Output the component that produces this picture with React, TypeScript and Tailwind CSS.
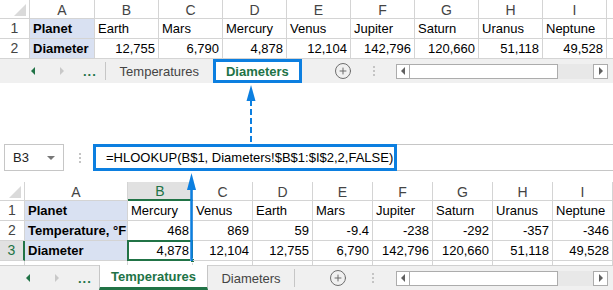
import { CirclePlus } from "lucide-react";

const topRows = [
  ["Planet", "Earth", "Mars", "Mercury", "Venus", "Jupiter", "Saturn", "Uranus", "Neptune"],
  ["Diameter", "12,755", "6,790", "4,878", "12,104", "142,796", "120,660", "51,118", "49,528"],
];

const bottomRows = [
  ["Planet", "Mercury", "Venus", "Earth", "Mars", "Jupiter", "Saturn", "Uranus", "Neptune"],
  ["Temperature, °F", "468", "869", "59", "-9.4", "-238", "-292", "-357", "-346"],
  ["Diameter", "4,878", "12,104", "12,755", "6,790", "142,796", "120,660", "51,118", "49,528"],
];

const cols = ["A", "B", "C", "D", "E", "F", "G", "H", "I"];

function Corner() {
  return (
    <div className="relative border-r border-b border-[#d4d4d4] bg-white">
      <svg className="absolute right-[3px] bottom-[2px]" width="12" height="12" viewBox="0 0 12 12">
        <polygon points="12,0 12,12 0,12" fill="#dadada" />
      </svg>
    </div>
  );
}

function Dots() {
  return (
    <div className="flex flex-col gap-[2px]">
      <span className="h-[2px] w-[2px] bg-[#c4c4c4]" />
      <span className="h-[2px] w-[2px] bg-[#c4c4c4]" />
      <span className="h-[2px] w-[2px] bg-[#c4c4c4]" />
    </div>
  );
}

function NavArrows({ pad }: { pad: string }) {
  return (
    <div className={`flex items-center ${pad}`}>
      <span className="h-0 w-0 border-y-[4px] border-r-[4px] border-y-transparent border-r-[#217346]" />
      <span className="ml-[25px] h-0 w-0 border-y-[4px] border-l-[4px] border-y-transparent border-l-[#c8c8c8]" />
      <span className="ml-[19px] text-[13px] font-bold leading-none tracking-[1px] text-[#217346]">...</span>
    </div>
  );
}

function HScroll() {
  return (
    <div className="ml-auto mr-[5px] flex h-[15px] w-[212px] bg-[#e8e8e8]">
      <div className="flex w-[14px] items-center justify-center border border-[#acacac] bg-white">
        <span className="h-0 w-0 border-y-[4px] border-r-[4px] border-y-transparent border-r-[#606060]" />
      </div>
      <div className="w-[148px] border-y border-r border-[#acacac] bg-white" />
      <div className="flex-1" />
      <div className="flex w-[15px] items-center justify-center border border-[#acacac] bg-white">
        <span className="h-0 w-0 border-y-[4px] border-l-[4px] border-y-transparent border-l-[#606060]" />
      </div>
    </div>
  );
}

export default function App() {
  return (
    <div className="relative h-[290px] w-[613px] overflow-hidden bg-white font-['Liberation_Sans',Arial,sans-serif] text-[13px] leading-[15px] text-black">
      {/* top sheet: Diameters */}
      <div className="grid grid-cols-[30px_65px_repeat(8,64px)_1fr] grid-rows-[19px_20px_20px]">
        <Corner />
        {cols.map((c) => (
          <div key={c} className="flex items-center justify-center border-r border-b border-[#d4d4d4] pt-px text-[14px] leading-[16px] text-[#444]">
            {c}
          </div>
        ))}
        <div className="border-b border-[#d4d4d4]" />
        {topRows.map((row, r) => (
          <>
            <div key={"h" + r} className="flex items-end justify-center border-r border-b border-[#d4d4d4] pb-[2px] text-[14px] leading-[16px] text-[#444]">
              {r + 1}
            </div>
            {row.map((v, i) => (
              <div
                key={r + "-" + i}
                className={`flex items-end overflow-hidden whitespace-nowrap border-r border-b border-[#d4d4d4] px-[3px] pb-[2px] ${
                  i === 0 ? "bg-[#d9e1f2] font-bold" : ""
                } ${r === 1 && i > 0 ? "justify-end" : ""}`}
              >
                {v}
              </div>
            ))}
            <div className="border-b border-[#d4d4d4]" />
          </>
        ))}
      </div>

      {/* top sheet tabs */}
      <div className="flex h-[24px] items-center bg-[#f0f0f0]">
        <NavArrows pad="pl-[31px]" />
        <div className="ml-[8px] h-[18px] w-px bg-[#c6c6c6]" />
        <div className="flex w-[107px] items-center justify-center text-[#444]">Temperatures</div>
        <div className="flex h-[24px] w-[89px] items-center justify-center border-[3px] border-[#0c7fe0] bg-white font-bold text-[#217346]">
          Diameters
        </div>
        <div className="ml-[32px] flex items-center">
          <CirclePlus size={18} strokeWidth={1.3} color="#6a6a6a" />
        </div>
        <div className="ml-[21px]">
          <Dots />
        </div>
        <HScroll />
      </div>

      {/* formula bar */}
      <div className="mt-[61px] flex h-[27px] items-stretch">
        <div className="ml-[4px] flex w-[60px] items-center justify-between border border-[#c6c6c6] pl-[8px] pr-[8px] text-[#222]">
          <span>B3</span>
          <span className="h-0 w-0 border-x-[4px] border-t-[4px] border-x-transparent border-t-[#777]" />
        </div>
        <div className="ml-[15px] flex items-center">
          <Dots />
        </div>
        <div className="ml-[12px] flex flex-1 items-stretch border-y border-[#c6c6c6]">
          <div className="-my-px flex w-[304px] items-center border-[3px] border-[#0c7fe0] pl-[10px] text-black">
            =HLOOKUP(B$1, Diameters!$B$1:$I$2,2,FALSE)
          </div>
        </div>
      </div>

      {/* bottom sheet: Temperatures */}
      <div className="mt-[11px] grid h-[83px] grid-cols-[25px_103px_65px_repeat(7,60px)] grid-rows-[19px_20px_20px_20px_1fr]">
        <Corner />
        {cols.map((c) => (
          <div
            key={c}
            className={`flex items-center justify-center border-r pt-px text-[14px] leading-[16px] ${
              c === "B"
                ? "border-b-2 border-b-[#217346] border-r-[#d4d4d4] bg-[#e1e1e1] text-[#217346]"
                : "border-b border-[#d4d4d4] text-[#444]"
            }`}
          >
            {c}
          </div>
        ))}
        {bottomRows.map((row, r) => (
          <>
            <div
              key={"bh" + r}
              className={`flex items-end justify-center border-b pb-[2px] text-[14px] leading-[16px] ${
                r === 2
                  ? "border-r-2 border-r-[#217346] border-b-[#d4d4d4] bg-[#e1e1e1] text-[#217346]"
                  : "border-r border-[#d4d4d4] text-[#444]"
              }`}
            >
              {r + 1}
            </div>
            {row.map((v, i) => (
              <div
                key={"b" + r + "-" + i}
                className={`relative flex items-end whitespace-nowrap border-r border-b border-[#d4d4d4] px-[3px] pb-[2px] ${
                  i === 0 ? "bg-[#d9e1f2] font-bold" : ""
                } ${r > 0 && i > 0 ? "justify-end" : ""}`}
              >
                {v}
                {r === 2 && i === 1 && (
                  <>
                    <span className="pointer-events-none absolute -top-px -left-px -right-px -bottom-px border-2 border-[#217346]" />
                    <span className="absolute -right-[3px] -bottom-[3px] h-[5px] w-[5px] border border-white bg-[#217346]" />
                  </>
                )}
              </div>
            ))}
          </>
        ))}
        <div className="border-r border-[#d4d4d4]" />
        {cols.map((c) => (
          <div key={"r4" + c} className="border-r border-[#d4d4d4]" />
        ))}
      </div>

      {/* bottom sheet tabs */}
      <div className="flex h-[25px] items-stretch border-t border-[#d0d0d0] bg-[#f0f0f0]">
        <NavArrows pad="pl-[26px] w-[99px]" />
        <div className="-mt-px flex w-[109px] items-center justify-center border-x border-[#c6c6c6] border-b-[3px] border-b-[#217346] bg-white font-bold text-[#217346]">
          Temperatures
        </div>
        <div className="my-[3px] flex w-[87px] items-center justify-center border-r border-[#c6c6c6] text-[#444]">Diameters</div>
        <div className="ml-[34px] flex items-center">
          <CirclePlus size={18} strokeWidth={1.3} color="#6a6a6a" />
        </div>
        <div className="ml-[25px] flex items-center">
          <Dots />
        </div>
        <div className="ml-auto flex items-center">
          <HScroll />
        </div>
      </div>

      {/* annotation arrows */}
      <svg className="pointer-events-none absolute left-0 top-0" width="613" height="290">
        <line x1="251" y1="100" x2="251" y2="144" stroke="#0c7fe0" strokeWidth="2" strokeDasharray="6 3" />
        <polygon points="251,85 246.5,101 255.5,101" fill="#0c7fe0" />
        <line x1="191.5" y1="188" x2="191.5" y2="261" stroke="#0c7fe0" strokeWidth="2.5" />
        <polygon points="191.5,173 187,190 196,190" fill="#0c7fe0" />
      </svg>
    </div>
  );
}
